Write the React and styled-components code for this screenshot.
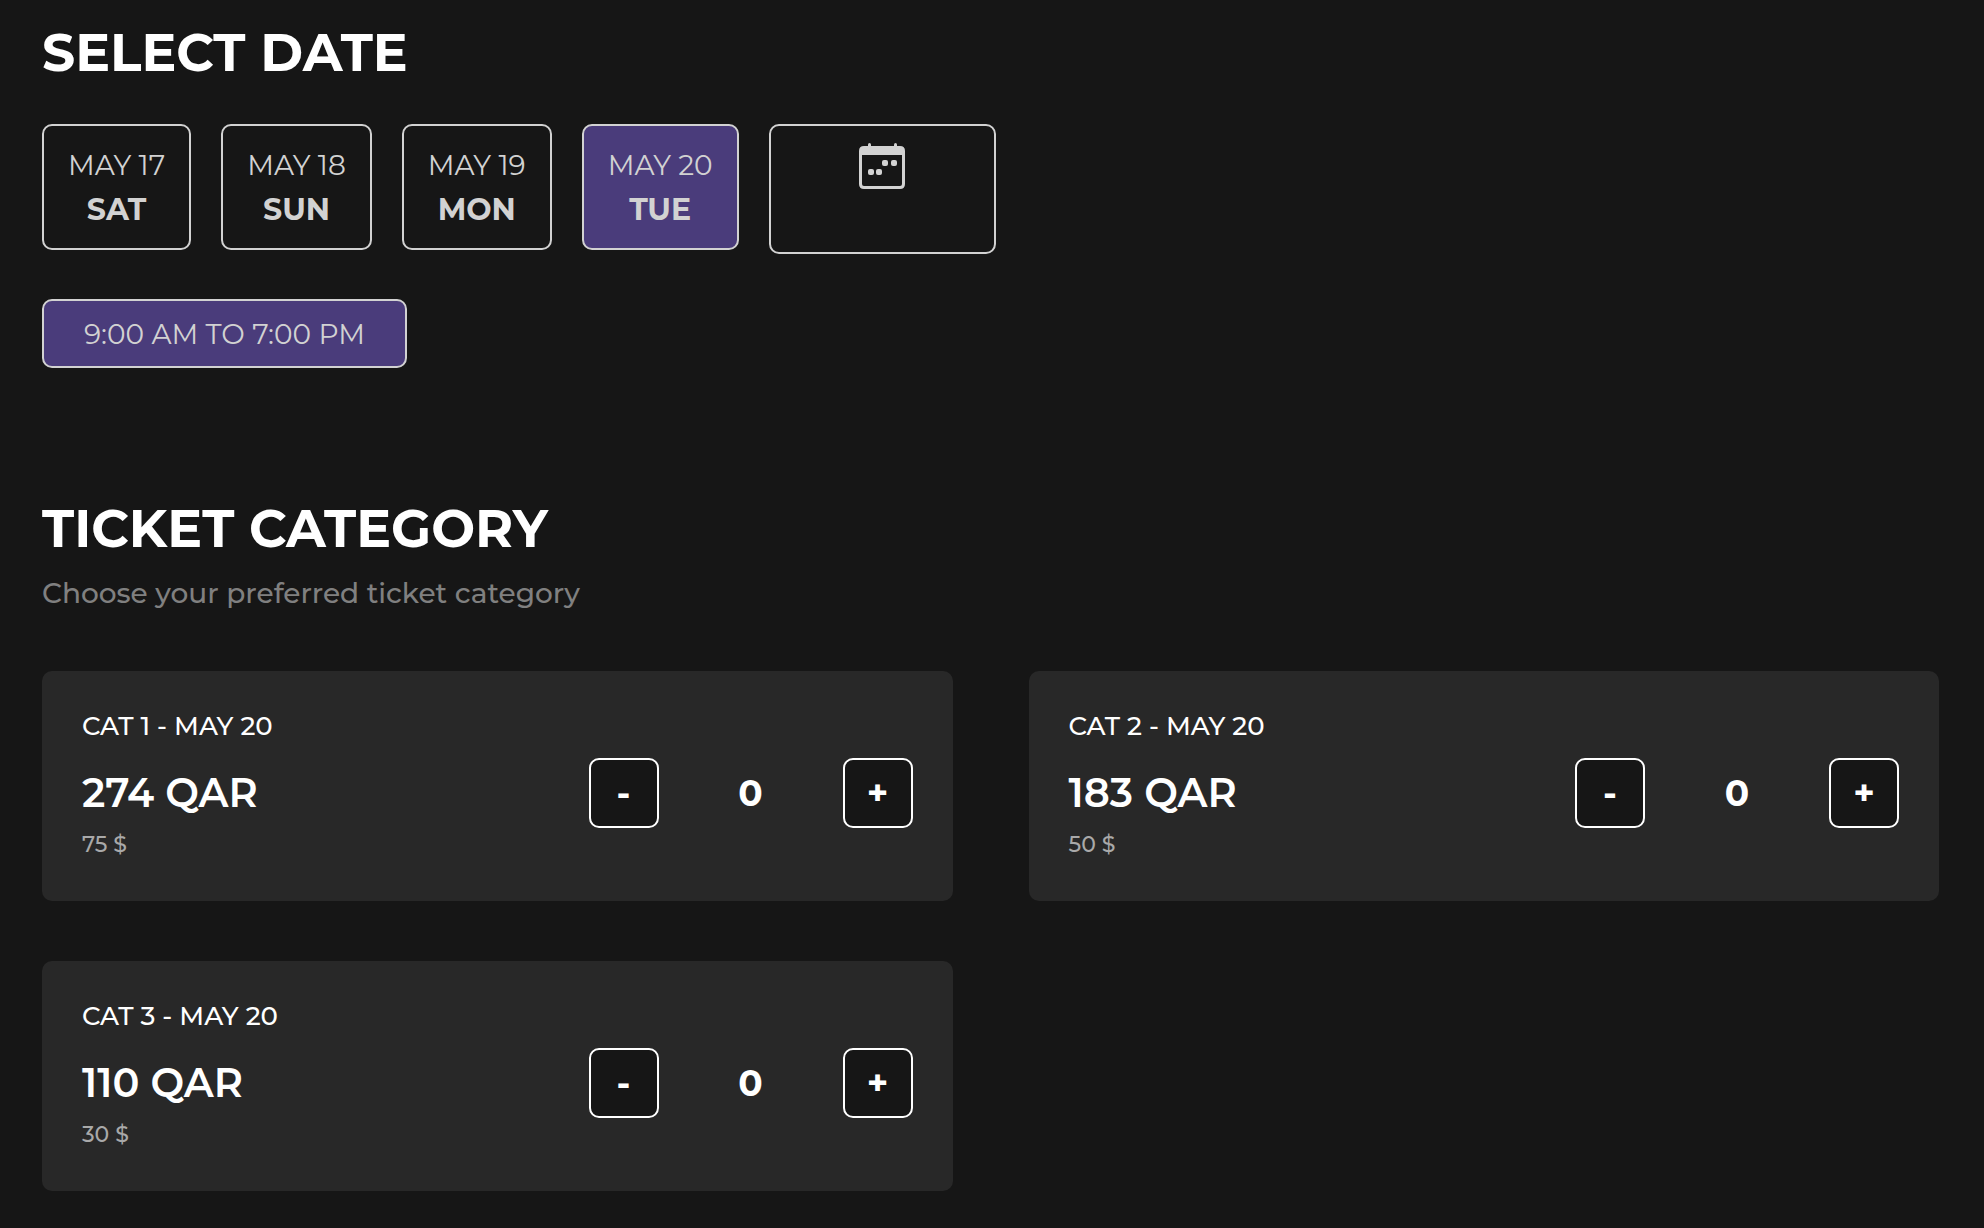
import React, { useState } from "react";
import styled, { createGlobalStyle } from 'styled-components'


const dates = [
  { id: 17, date: 'MAY 17', day: 'SAT' },
  { id: 18, date: 'MAY 18', day: 'SUN' },
  { id: 19, date: 'MAY 19', day: 'MON' },
  { id: 20, date: 'MAY 20', day: 'TUE' },
]

const tickets = [
  { name: 'CAT 1', qar: 274, usd: 75 },
  { name: 'CAT 2', qar: 183, usd: 50 },
  { name: 'CAT 3', qar: 110, usd: 30 },
]

function CalendarIcon() {
  return (
    <svg width="46" height="46" viewBox="0 0 46 46" fill="currentColor" aria-hidden="true">
      <rect x="9" y="0" width="3" height="6" rx="1.5" />
      <rect x="35" y="0" width="3" height="6" rx="1.5" />
      <path fillRule="evenodd" d="M5 3H41Q46 3 46 8V41Q46 46 41 46H5Q0 46 0 41V8Q0 3 5 3ZM3 12V41Q3 43 5 43H41Q43 43 43 41V12Z" />
      <rect x="23" y="17" width="6" height="6" rx="2" />
      <rect x="32" y="17" width="6" height="6" rx="2" />
      <rect x="9" y="26" width="6" height="6" rx="2" />
      <rect x="17" y="26" width="6" height="6" rx="2" />
    </svg>
  )
}

function Ticket({ name, date, qar, usd }) {
  const [count, setCount] = useState(0)

  return (
    <Card>
      <CardName>{name} - {date}</CardName>
      <CardRow>
        <Price>{qar} QAR</Price>
        <Counter>
          <CountButton aria-label={`Remove ${name}`} onClick={() => setCount(Math.max(0, count - 1))}>-</CountButton>
          <Count>{count}</Count>
          <CountButton aria-label={`Add ${name}`} onClick={() => setCount(count + 1)}>+</CountButton>
        </Counter>
      </CardRow>
      <Usd>{usd} $</Usd>
    </Card>
  )
}

export default function App() {
  const [selected, setSelected] = useState(20)
  const current = dates.find((d) => d.id === selected)

  return (
    <Page>
      <GlobalStyle />
      <Heading>SELECT DATE</Heading>
      <DateRow>
        {dates.map((d) => (
          <DateButton key={d.id} $active={d.id === selected} aria-pressed={d.id === selected} onClick={() => setSelected(d.id)}>
            <DateText>{d.date}</DateText>
            <DayText>{d.day}</DayText>
          </DateButton>
        ))}
        <CalendarButton aria-label="Pick another date">
          <CalendarIcon />
        </CalendarButton>
      </DateRow>
      <TimeButton $active aria-pressed="true">9:00 AM TO 7:00 PM</TimeButton>

      <Category>
        <Heading>TICKET CATEGORY</Heading>
        <SubText>Choose your preferred ticket category</SubText>
        <Cards>
          {tickets.map((t) => (
            <Ticket key={t.name} date={current.date} {...t} />
          ))}
        </Cards>
      </Category>
    </Page>
  )
}

const GlobalStyle = createGlobalStyle`
  * {
    box-sizing: border-box;
  }
  body {
    margin: 0;
    background-color: #161616;
    font-family: Montserrat, Inter, sans-serif;
  }
  button {
    font-family: inherit;
    cursor: pointer;
  }
`
const Page = styled.main`
  padding: 24px 45px 38px 42px;
  color: #ffffff;
`
const Heading = styled.h1`
  margin: 0;
  font-size: 52px;
  font-weight: 700;
  line-height: 58px;
`
const DateRow = styled.div`
  display: flex;
  flex-wrap: wrap;
  align-items: flex-start;
  gap: 30px;
  margin-top: 42px;
`
const Box = styled.button`
  background-color: ${(props) => (props.$active ? '#4a3c7b' : 'transparent')};
  border: 2px solid #d2d2d2;
  border-radius: 10px;
  color: #d2d2d2;
`
const DateButton = styled(Box)`
  display: flex;
  flex-direction: column;
  align-items: center;
  padding: 17px 24px 15px;
`
const DateText = styled.span`
  font-size: 28px;
  line-height: 44px;
`
const DayText = styled.span`
  font-size: 30px;
  font-weight: 700;
  line-height: 46px;
`
const CalendarButton = styled(Box)`
  display: flex;
  justify-content: center;
  align-items: flex-start;
  width: 227px;
  height: 130px;
  padding: 17px 24px;
`
const TimeButton = styled(Box)`
  display: block;
  margin-top: 45px;
  padding: 13px 40px 12px;
  font-size: 28px;
  line-height: 40px;
`
const Category = styled.section`
  margin-top: 132px;
`
const SubText = styled.p`
  margin: 15px 0 0;
  font-size: 28px;
  font-weight: 500;
  line-height: 40px;
  color: #808080;
`
const Cards = styled.div`
  display: grid;
  grid-template-columns: 1fr 1fr;
  gap: 60px 76px;
  margin-top: 58px;
`
const Card = styled.article`
  padding: 40px;
  background-color: #282828;
  border-radius: 10px;
`
const CardName = styled.h2`
  margin: 0;
  font-size: 26px;
  font-weight: 500;
  line-height: 30px;
`
const CardRow = styled.div`
  display: flex;
  align-items: center;
  justify-content: space-between;
  margin-top: 17px;
`
const Price = styled.div`
  font-size: 40px;
  font-weight: 600;
  line-height: 50px;
`
const Counter = styled.div`
  display: flex;
  align-items: center;
`
const CountButton = styled.button`
  width: 70px;
  height: 70px;
  padding: 0;
  background-color: #161616;
  border: 2px solid #ffffff;
  border-radius: 10px;
  color: #ffffff;
  font-size: 36px;
  font-weight: 700;
`
const Count = styled.output`
  width: 184px;
  text-align: center;
  font-size: 36px;
  font-weight: 700;
`
const Usd = styled.div`
  font-size: 22px;
  font-weight: 500;
  line-height: 33px;
  color: #a9a9a9;
`
